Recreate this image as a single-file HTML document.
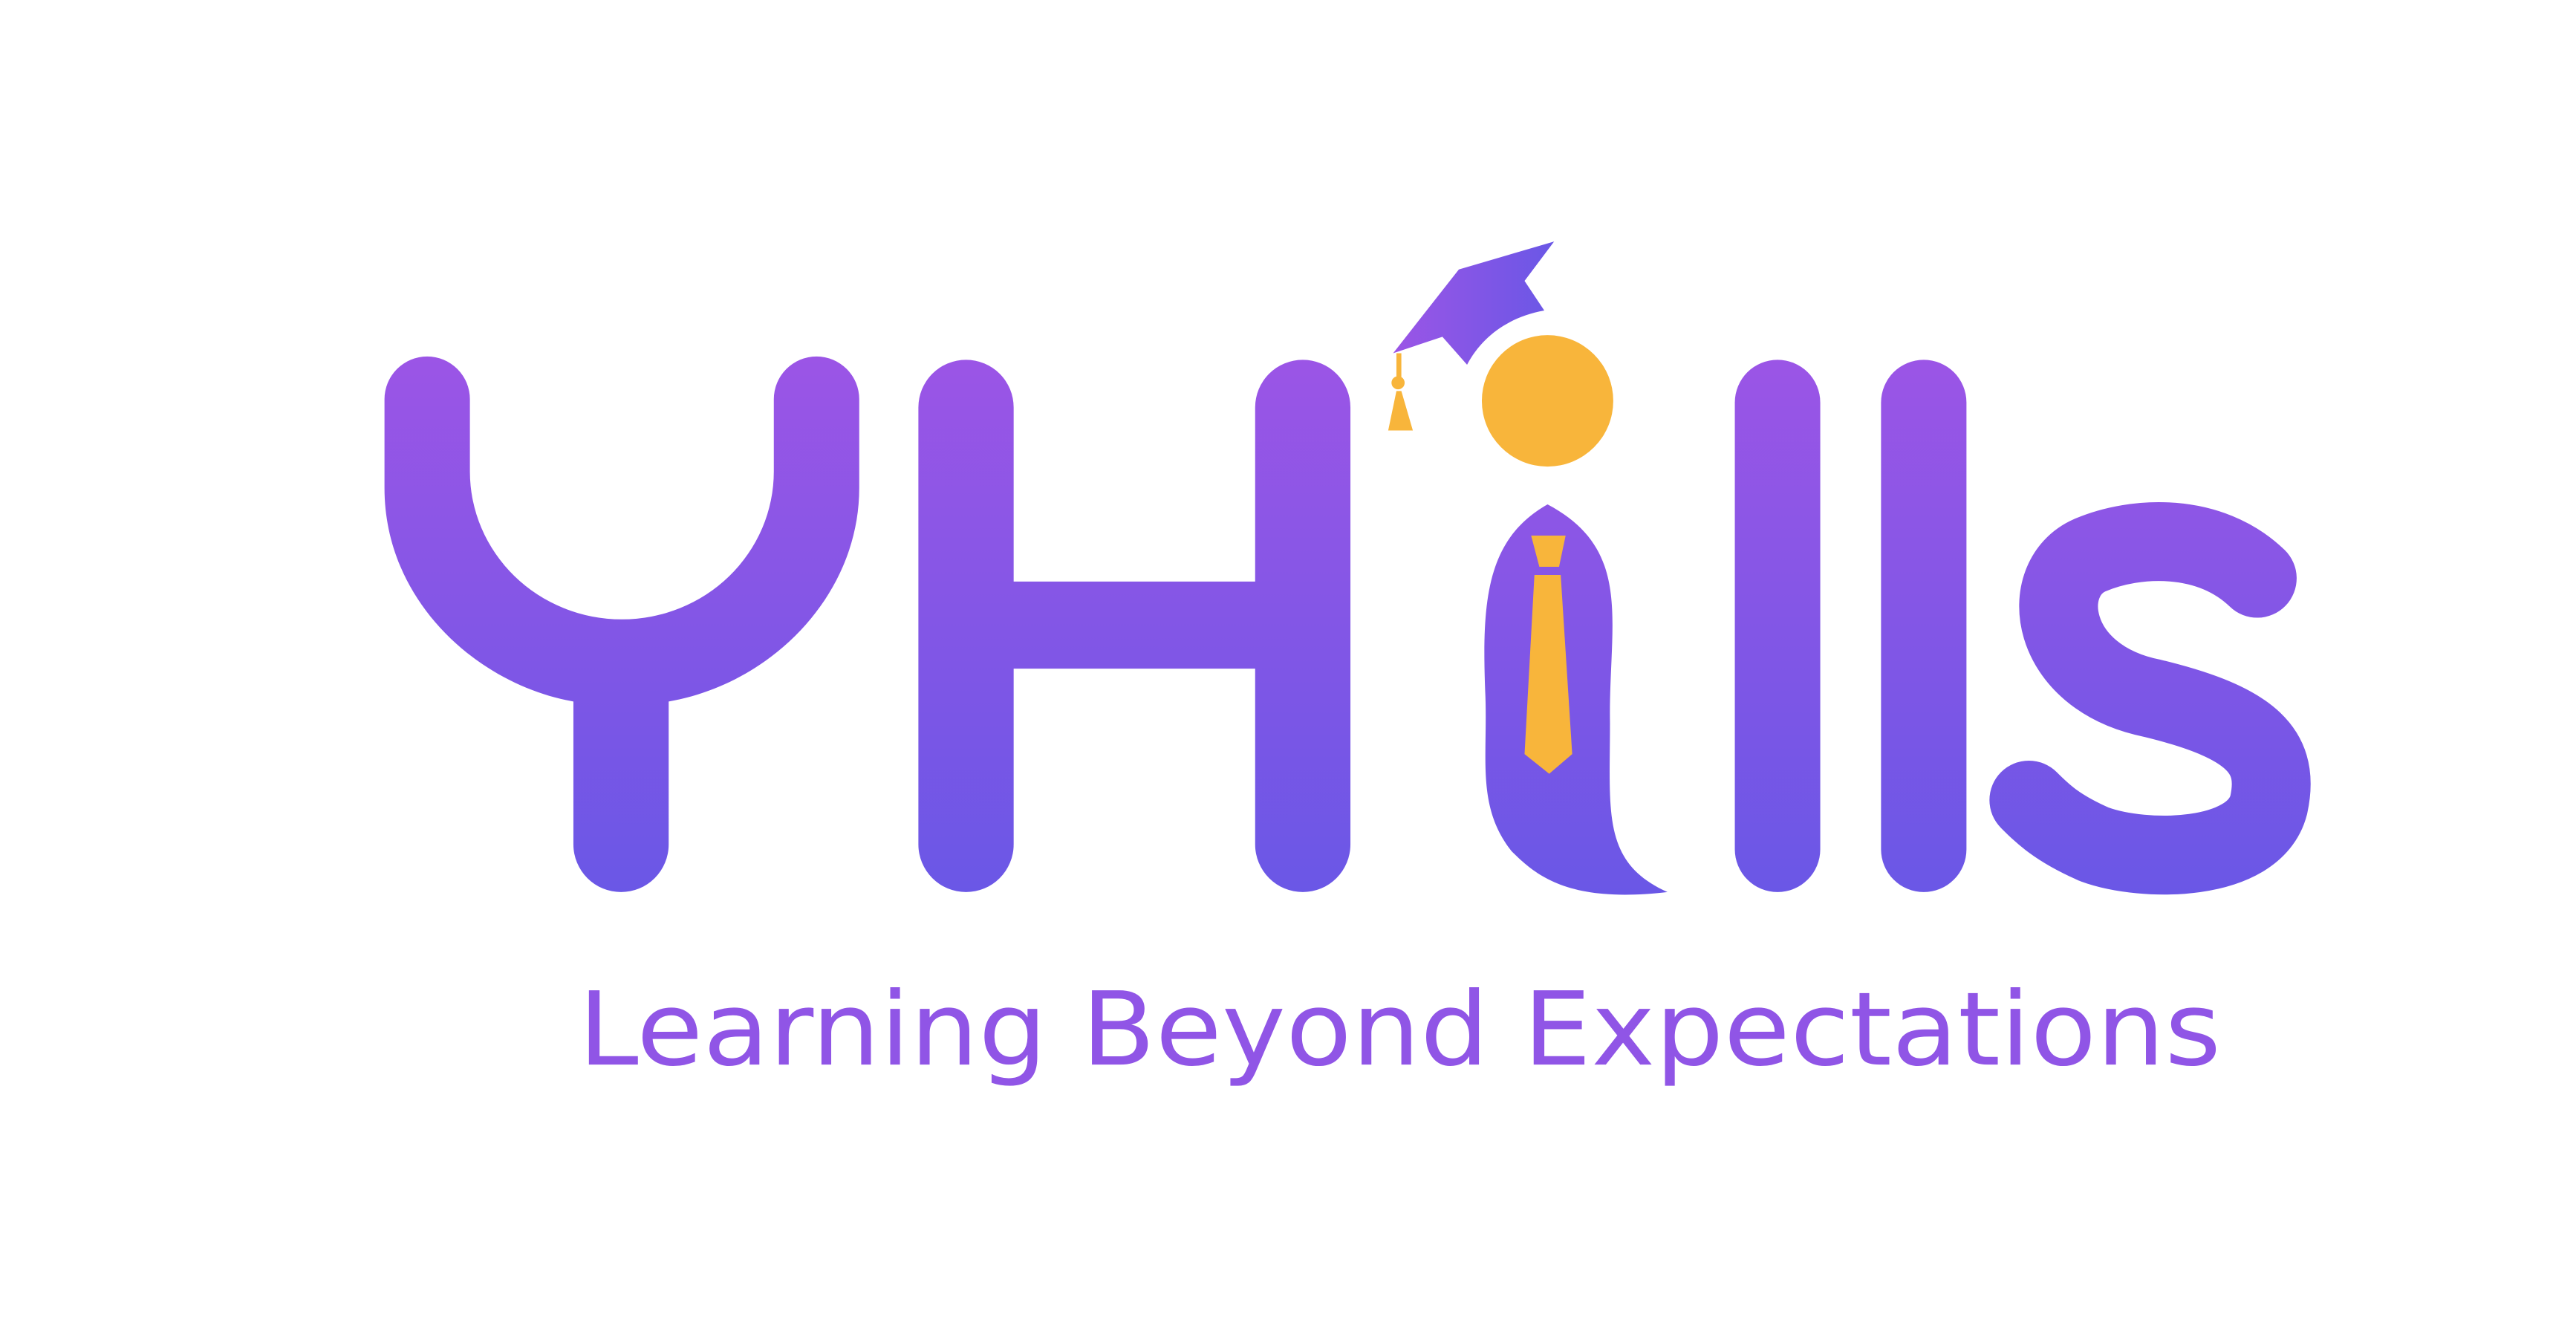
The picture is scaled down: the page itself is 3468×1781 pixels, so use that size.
<!DOCTYPE html>
<html><head><meta charset="utf-8"><style>html,body{margin:0;padding:0;background:#fff}svg{display:block}</style></head>
<body>
<svg width="3468" height="1781" viewBox="0 0 1568 805.3" xmlns="http://www.w3.org/2000/svg">
<defs>
<linearGradient id="g" x1="0" y1="218" x2="0" y2="545" gradientUnits="userSpaceOnUse">
<stop offset="0" stop-color="#9b55e6"/><stop offset="1" stop-color="#6a57e6"/></linearGradient>
<linearGradient id="gc" x1="848" y1="0" x2="946" y2="0" gradientUnits="userSpaceOnUse">
<stop offset="0" stop-color="#9b55e6"/><stop offset="1" stop-color="#6a57e6"/></linearGradient>
</defs>
<rect width="1568" height="805.3" fill="#fff"/>
<g fill="url(#g)">
<path d="M234,243 a26,26 0 0 1 52,0 V287 A92.5,90 0 0 0 471,287 V243 a26,26 0 0 1 52,0 V297 C523,362 470,416 407,427 V514 a29,29 0 0 1 -58,0 V427 C292,417 234,367 234,297 Z"/>
<rect x="559" y="219" width="58" height="324" rx="29"/>
<rect x="764" y="219" width="58" height="324" rx="29"/>
<rect x="615" y="354" width="151" height="53" rx="2"/>
<rect x="1056" y="219" width="52" height="324" rx="26"/>
<rect x="1145" y="219" width="52" height="324" rx="26"/>
<path d="M942,307 C905,328 902,365 904,420 C906,460 898,490 920,518 C935,533 955,550 1015,543 C975,525 980,495 980,440 C979,380 995,335 942,307 Z"/>
</g>
<path d="M1374,352 C1345,324 1300,326 1272,338 C1240,352 1246,412 1310,425 C1372,440 1388,458 1381,490 C1372,525 1305,525 1275,514 C1252,504 1243,495 1235,487" fill="none" stroke="url(#g)" stroke-width="48" stroke-linecap="round"/>
<path d="M848,215 L888,164 L946,147 L928,171 L940,189 C918,193 902,205 893,222 L878,205 Z" fill="url(#gc)"/>
<g fill="#f8b53b">
<circle cx="942" cy="244" r="40"/>
<rect x="850" y="215" width="3" height="17"/>
<circle cx="851" cy="233" r="4"/>
<path d="M845,262 L850,238 L853,238 L860,262 Z"/>
<path d="M932,326 L953,326 L949,345 L937,345 Z"/>
<path d="M934,350 L950,350 L957,459 L943,471 L928,459 Z"/>
</g>
<text x="352" y="648" font-family="DejaVu Sans, sans-serif" font-size="62" fill="#9055e6" textLength="1000" lengthAdjust="spacingAndGlyphs">Learning Beyond Expectations</text>
</svg>
</body></html>
